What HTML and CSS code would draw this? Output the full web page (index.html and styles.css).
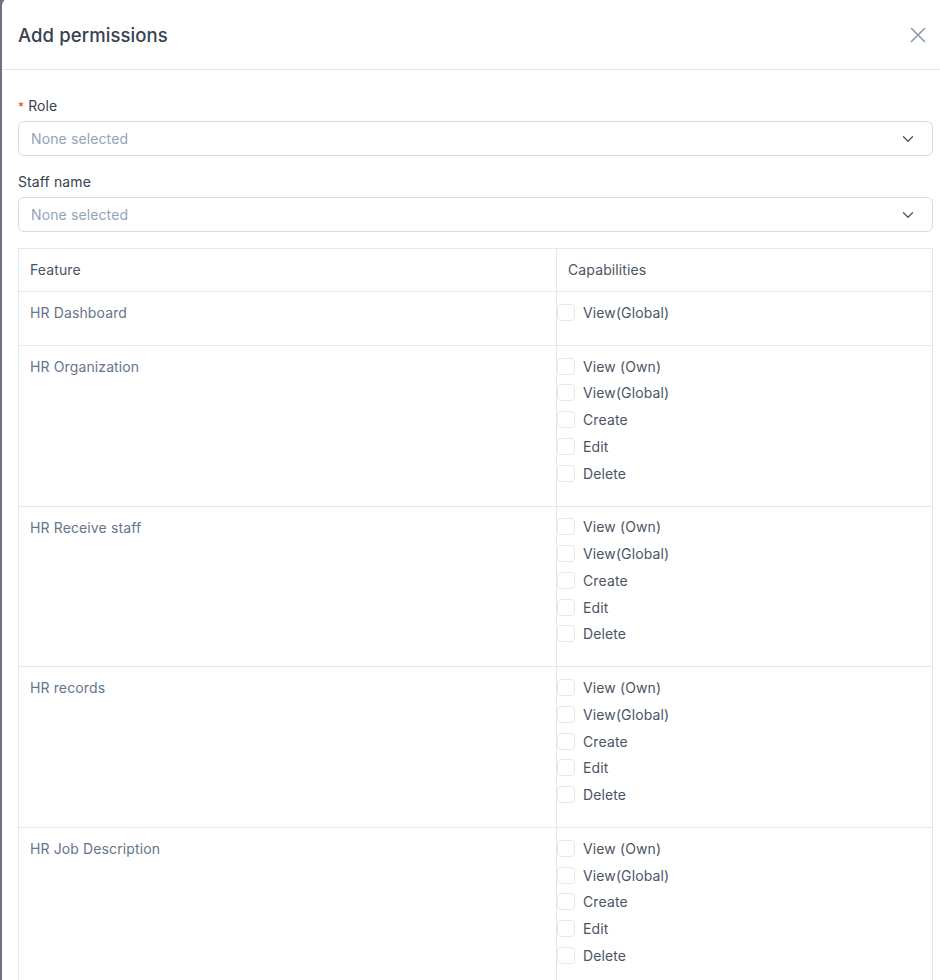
FILE: index.html
```html
<!DOCTYPE html>
<html lang="en">
<head>
<meta charset="utf-8">
<title>Add permissions</title>
<link rel="stylesheet" href="styles.css">
</head>
<body>
<div class="modal">
  <div class="modal-header">
    <h2 class="modal-title">Add permissions</h2>
    <button class="close-btn" aria-label="Close">
      <svg width="16" height="16" viewBox="0 0 16 16" fill="none" stroke="#8a9ab0" stroke-width="1.6" stroke-linecap="round"><path d="M1.5 1.5l13 13M14.5 1.5l-13 13"/></svg>
    </button>
  </div>
  <div class="modal-body">
    <label class="field-label"><span class="req">*</span>Role</label>
    <div class="select">
      <span class="placeholder">None selected</span>
      <svg class="chev" width="12" height="8" viewBox="0 0 12 8" fill="none" stroke="#4b5563" stroke-width="1.3" stroke-linecap="round" stroke-linejoin="round"><path d="M1.5 1.8l4.5 4.4 4.5-4.4"/></svg>
    </div>
    <label class="field-label second">Staff name</label>
    <div class="select">
      <span class="placeholder">None selected</span>
      <svg class="chev" width="12" height="8" viewBox="0 0 12 8" fill="none" stroke="#4b5563" stroke-width="1.3" stroke-linecap="round" stroke-linejoin="round"><path d="M1.5 1.8l4.5 4.4 4.5-4.4"/></svg>
    </div>

    <table class="perm-table">
      <thead>
        <tr>
          <th class="col-feature">Feature</th>
          <th class="col-cap">Capabilities</th>
        </tr>
      </thead>
      <tbody>
        <tr>
          <td class="feature">HR Dashboard</td>
          <td class="caps">
            <label class="cap"><span class="box"></span>View(Global)</label>
          </td>
        </tr>
        <tr>
          <td class="feature">HR Organization</td>
          <td class="caps">
            <label class="cap"><span class="box"></span>View (Own)</label>
            <label class="cap"><span class="box"></span>View(Global)</label>
            <label class="cap"><span class="box"></span>Create</label>
            <label class="cap"><span class="box"></span>Edit</label>
            <label class="cap"><span class="box"></span>Delete</label>
          </td>
        </tr>
        <tr>
          <td class="feature">HR Receive staff</td>
          <td class="caps">
            <label class="cap"><span class="box"></span>View (Own)</label>
            <label class="cap"><span class="box"></span>View(Global)</label>
            <label class="cap"><span class="box"></span>Create</label>
            <label class="cap"><span class="box"></span>Edit</label>
            <label class="cap"><span class="box"></span>Delete</label>
          </td>
        </tr>
        <tr>
          <td class="feature">HR records</td>
          <td class="caps">
            <label class="cap"><span class="box"></span>View (Own)</label>
            <label class="cap"><span class="box"></span>View(Global)</label>
            <label class="cap"><span class="box"></span>Create</label>
            <label class="cap"><span class="box"></span>Edit</label>
            <label class="cap"><span class="box"></span>Delete</label>
          </td>
        </tr>
        <tr>
          <td class="feature">HR Job Description</td>
          <td class="caps">
            <label class="cap"><span class="box"></span>View (Own)</label>
            <label class="cap"><span class="box"></span>View(Global)</label>
            <label class="cap"><span class="box"></span>Create</label>
            <label class="cap"><span class="box"></span>Edit</label>
            <label class="cap"><span class="box"></span>Delete</label>
          </td>
        </tr>
      </tbody>
    </table>
  </div>
</div>
</body>
</html>
```

FILE: styles.css
```css
* { box-sizing: border-box; }

html, body {
  margin: 0;
  padding: 0;
  height: 100%;
}

body {
  background: #6b7280;
  font-family: Inter, "Noto Sans", "Liberation Sans", sans-serif;
  font-size: 14px;
  letter-spacing: 0.12px;
  color: #374151;
  overflow: hidden;
}

.modal {
  margin-left: 2px;
  margin-top: -2px;
  min-height: 1100px;
  background: #ffffff;
  border-top-left-radius: 8px;
}

.modal-header {
  height: 72px;
  padding: 2px 14px 0 16px;
  display: flex;
  align-items: center;
  justify-content: space-between;
  border-bottom: 1px solid #e5e7eb;
}

.modal-title {
  margin: 0;
  font-size: 18.5px;
  font-weight: 500;
  color: #374151;
  letter-spacing: 0.1px;
}

.close-btn {
  border: 0;
  background: none;
  padding: 0;
  width: 16px;
  height: 16px;
  display: flex;
  cursor: pointer;
}

.modal-body {
  padding: 26px 7px 0 16px;
}

.field-label {
  display: block;
  height: 20px;
  line-height: 20px;
  font-size: 14px;
  color: #374151;
  margin-bottom: 5px;
}

.field-label.second {
  margin-top: 16px;
}

.req {
  color: #ef4444;
  margin-right: 4px;
  font-size: 12px;
}

.select {
  height: 35px;
  border: 1px solid #d5dce8;
  border-radius: 6px;
  display: flex;
  align-items: center;
  justify-content: space-between;
  padding: 0 18px 0 12px;
}

.placeholder {
  color: #94a3b8;
  font-size: 14px;
}

.chev { display: block; }

.perm-table {
  width: 100%;
  margin-top: 16px;
  border-collapse: collapse;
  border: 1px solid #e3e8f0;
}

.perm-table th,
.perm-table td {
  border: 1px solid #e3e8f0;
  text-align: left;
  vertical-align: top;
}

.perm-table th {
  height: 43px;
  vertical-align: middle;
  font-weight: 400;
  font-size: 14px;
  color: #4b5563;
  padding: 0 11px 2px;
}

.col-feature { width: 538px; }

.feature {
  padding: 11px 11px 10px;
  line-height: 20px;
  color: #66758a;
}

.caps {
  padding: 7px 0 19px 0;
}

.cap {
  display: flex;
  align-items: center;
  gap: 8px;
  height: 26.75px;
  color: #4b5563;
}

.box {
  width: 18px;
  height: 17px;
  border: 1px solid #e3e8f0;
  border-radius: 4px;
  background: #fff;
  flex: none;
}
```
